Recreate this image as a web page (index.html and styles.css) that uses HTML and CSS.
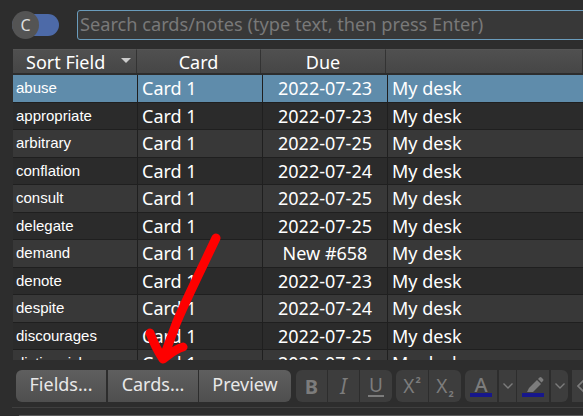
FILE: index.html
```html
<!DOCTYPE html>
<html lang="en">
<head>
<meta charset="utf-8">
<title>Browse</title>
<link rel="stylesheet" href="styles.css">
</head>
<body>
<div class="top">
  <div class="switch"><span class="knob">C</span></div>
  <div class="search">Search cards/notes (type text, then press Enter)</div>
</div>
<div class="table">
  <div class="head">
    <div class="hcell">Sort Field<span class="sort"></span></div>
    <div class="hcell">Card</div>
    <div class="hcell">Due</div>
    <div class="hcell"></div>
  </div>
  <div class="rows">
    <div class="row sel"><div class="c f">abuse</div><div class="c">Card 1</div><div class="c d">2022-07-23</div><div class="c">My desk</div></div>
    <div class="row"><div class="c f">appropriate</div><div class="c">Card 1</div><div class="c d">2022-07-23</div><div class="c">My desk</div></div>
    <div class="row alt"><div class="c f">arbitrary</div><div class="c">Card 1</div><div class="c d">2022-07-25</div><div class="c">My desk</div></div>
    <div class="row"><div class="c f">conflation</div><div class="c">Card 1</div><div class="c d">2022-07-24</div><div class="c">My desk</div></div>
    <div class="row alt"><div class="c f">consult</div><div class="c">Card 1</div><div class="c d">2022-07-25</div><div class="c">My desk</div></div>
    <div class="row"><div class="c f">delegate</div><div class="c">Card 1</div><div class="c d">2022-07-25</div><div class="c">My desk</div></div>
    <div class="row alt"><div class="c f">demand</div><div class="c">Card 1</div><div class="c d">New #658</div><div class="c">My desk</div></div>
    <div class="row"><div class="c f">denote</div><div class="c">Card 1</div><div class="c d">2022-07-23</div><div class="c">My desk</div></div>
    <div class="row alt"><div class="c f">despite</div><div class="c">Card 1</div><div class="c d">2022-07-24</div><div class="c">My desk</div></div>
    <div class="row"><div class="c f">discourages</div><div class="c">Card 1</div><div class="c d">2022-07-25</div><div class="c">My desk</div></div>
    <div class="row alt"><div class="c f">distinguish</div><div class="c">Card 1</div><div class="c d">2022-07-24</div><div class="c">My desk</div></div>
  </div>
</div>
<div class="toolbar">
  <div class="group">
    <div class="btn">Fields...</div>
    <div class="btn">Cards...</div>
    <div class="btn">Preview</div>
  </div>
  <div class="icons">
    <div class="ib b">B</div>
    <div class="ib i">I</div>
    <div class="ib u"><span class="uline">U</span></div>
  </div>
  <div class="icons">
    <div class="ib sc"><span>X</span><span class="sup">2</span></div>
    <div class="ib sc"><span>X</span><span class="sub">2</span></div>
  </div>
  <div class="icons">
    <div class="ib color"><span class="a">A</span><span class="bar"></span></div>
    <div class="ib chev"><svg width="12" height="8" viewBox="0 0 12 8"><path d="M1.5 1.5L6 6l4.500-4.500" fill="none" stroke="#7c7c7c" stroke-width="1.4"/></svg></div>
    <div class="ib color"><svg class="pen" width="18" height="16" viewBox="0 0 18 16"><path d="M1 15l2-4 8-8 4 4-8 8zM12 2l1.500-1.500a1.500 1.500 0 0 1 2 0l1.500 1.500a1.500 1.500 0 0 1 0 2L15.500 5.500z" fill="#7c7c7c"/></svg><span class="bar"></span></div>
    <div class="ib chev"><svg width="12" height="8" viewBox="0 0 12 8"><path d="M1.5 1.500L6 6l4.500-4.500" fill="none" stroke="#7c7c7c" stroke-width="1.4"/></svg></div>
  </div>
  <div class="icons"><div class="ib"><svg class="eraser" width="16" height="16" viewBox="0 0 16 16"><path d="M7 2L1 8l5 5 6-6z" fill="none" stroke="#7c7c7c" stroke-width="1.6"/></svg></div></div>
</div>
<div class="rule"></div>
<div class="strip"></div>
<svg class="arrow" width="90" height="140" viewBox="0 0 90 140"><path d="M71 6C56 38 40 70 31 92L18 127M5 101C8 109 12 118 18 127C25 122 30 117 38 115" fill="none" stroke="#fe0000" stroke-width="9" stroke-linecap="round" stroke-linejoin="round"/></svg>
</body>
</html>
```
FILE: styles.css
```css
html, body { margin: 0; padding: 0; }
body {
  width: 583px; height: 416px; overflow: hidden; position: relative;
  background: #2d2d2d; color: #fff;
  font-family: "Noto Sans", sans-serif;
}
.top { display: flex; align-items: center; height: 49px; padding: 0 0 0 12px; box-sizing: border-box; }
.switch { width: 47px; height: 22px; margin-top: 1px; border-radius: 11px; background: #4d6aa8; position: relative; flex: none; }
.knob {
  position: absolute; left: 0; top: -3px; width: 27px; height: 28px; border-radius: 50%;
  background: #545454; color: #ddd; font-size: 16px; line-height: 28px; text-align: center;
}
.search {
  flex: none; width: 520px; height: 30px; margin: 1px 0 0 18px; box-sizing: border-box;
  border: 1px solid #6a9cbc; border-radius: 3px; background: #383838; color: #797979;
  font-size: 18.2px; line-height: 27px; padding-left: 2px; white-space: nowrap;
}
.table { margin-left: 13px; height: 311px; overflow: hidden; }
.head { display: grid; grid-template-columns: 124px 124px 125px 1fr; height: 24px; background: #4d4d4d; margin-bottom: 2px; }
.hcell {
  position: relative; text-align: center; font-size: 18px; line-height: 25px; height: 24px;
  border-right: 1px solid #333; border-top: 1px solid #555; box-sizing: border-box; background: linear-gradient(#505050, #464646);
}
.hcell:first-child { text-align: left; padding-left: 13px; }
.sort { position: absolute; right: 5px; top: 8px; border: 5px solid transparent; border-top: 5px solid #ccc; border-bottom: 0; }
.row { display: grid; grid-template-columns: 125px 125px 125px 1fr; height: 27.5px; background: #2b2b2b; box-sizing: border-box; border-bottom: 1px solid #1f1f1f; }
.row.alt { background: #383838; }
.row.sel { background: #5f8cab; }
.c { border-right: 1px solid #1f1f1f; font-size: 18px; line-height: 26px; padding-left: 4px; white-space: nowrap; overflow: hidden; }
.c:last-child { border-right: 0; }
.row .f { font-family: "Liberation Sans", sans-serif; font-size: 15px; line-height: 25px; padding-left: 3px; }
.row .d { text-align: center; padding-left: 0; }
.toolbar { display: flex; margin: 10px 0 0 16px; height: 32px; gap: 4px; }
.group { display: flex; gap: 1px; flex: none; margin-right: 1px; }
.btn {
  height: 32px; box-sizing: border-box; background: linear-gradient(#5f5f5f, #4f4f4f);
  font-size: 18px; line-height: 29px; text-align: center; color: #e8e8e8; width: 90px;
}
.btn:first-child { border-radius: 6px 0 0 6px; margin-right: 1px; }
.btn:last-child { border-radius: 0 6px 6px 0; width: 92px; }
.icons { display: flex; gap: 1px; flex: none; }
.ib {
  height: 32px; width: 31px; background: #3d3d3d; color: #7c7c7c; display: flex; align-items: center; justify-content: center;
  font-size: 20px; position: relative; flex: none;
}
.icons .ib:first-child { border-radius: 6px 0 0 6px; }
.icons .ib:last-child { border-radius: 0 6px 6px 0; }
.b { font-weight: 700; }
.i { font-style: italic; font-weight: 400; font-size: 21px; }
.u { width: 32px; }
.uline { border-bottom: 2px solid #7c7c7c; line-height: 20px; height: 20px; padding: 0 1px; font-size: 19px; }
.sc { width: 32px; font-size: 19px; }
.sup, .sub { font-size: 9px; font-weight: 700; position: relative; margin-left: 1px; }
.sup { top: -7px; }
.sub { top: 7px; }
.color { width: 32px; }
.a { position: absolute; left: 0; right: 0; top: 3px; text-align: center; font-size: 20px; font-weight: 500; line-height: 24px; }
.pen { position: absolute; left: 9px; top: 7px; }
.bar { position: absolute; left: 5px; bottom: 5px; width: 22px; height: 4px; background: #17178c; }
.chev { width: 17px; margin-left: 1px; }
.eraser { margin-left: -6px; }
.rule { height: 1px; background: #3f3f3f; margin: 5px 0 0 12px; }
.strip { position: absolute; left: 19px; right: 0; top: 415px; height: 1px; background: #5a5a5a; }
.arrow { position: absolute; left: 145px; top: 232px; }
```
